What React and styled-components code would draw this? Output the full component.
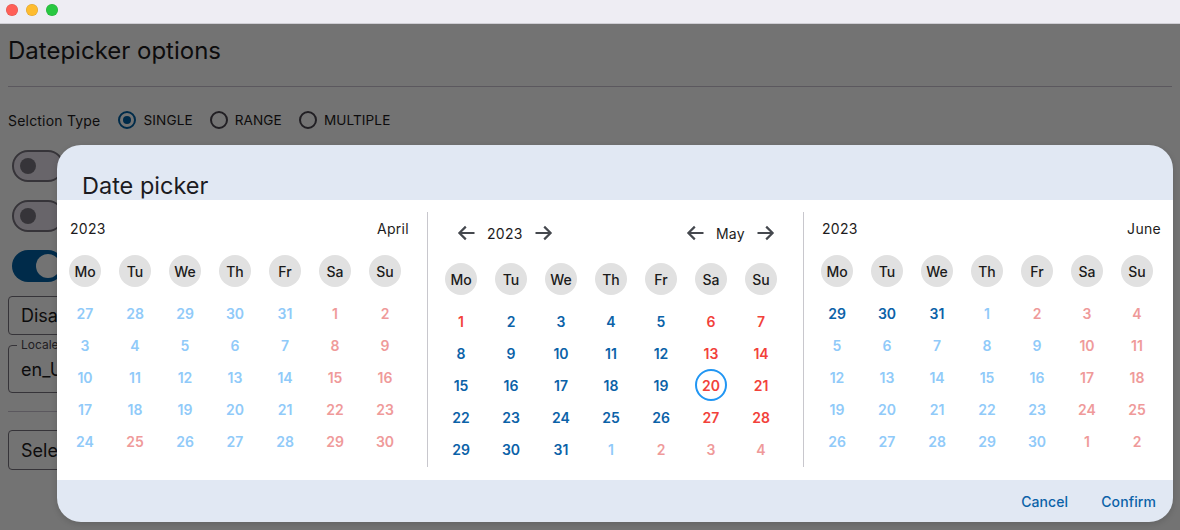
import React from 'react';
import styled, { createGlobalStyle, css } from 'styled-components';

const GlobalStyle = createGlobalStyle`
  html, body { margin: 0; padding: 0; width: 100%; height: 100%; overflow: hidden; background: #ffffff; }
  body { font-family: Inter, "Noto Sans", sans-serif; -webkit-font-smoothing: antialiased; }
  * { box-sizing: border-box; }
`;

/* ---------- window chrome ---------- */
const Window = styled.div`
  width: 1180px;
  height: 530px;
  display: flex;
  flex-direction: column;
  background: #ffffff;
`;

const TitleBar = styled.div`
  height: 24px;
  flex: none;
  display: flex;
  align-items: flex-start;
  gap: 8px;
  padding: 4px 0 0 6px;
  background: #eeedf3;
  border-bottom: 1px solid #cfced4;
`;

const Light = styled.span`
  width: 12px;
  height: 12px;
  border-radius: 50%;
  background: ${(p) => p.$color};
  box-shadow: inset 0 0 0 0.5px rgba(0, 0, 0, 0.15);
`;

const Viewport = styled.div`
  position: relative;
  flex: 1;
  overflow: hidden;
`;

/* ---------- underlying page ---------- */
const Page = styled.div`
  padding: 12px 8px 0;
  display: flex;
  flex-direction: column;
  color: #1d1b20;
`;

const PageTitle = styled.h1`
  margin: 0;
  font-size: 24px;
  line-height: 30px;
  font-weight: 400;
`;

const Rule = styled.hr`
  margin: ${(p) => p.$top}px 0 0;
  border: none;
  height: 1px;
  background: #cac4d0;
`;

const RadioRow = styled.div`
  margin-top: 21px;
  height: 24px;
  display: flex;
  align-items: center;
  font-size: 14px;
  letter-spacing: 0.2px;
`;

const RowLabel = styled.span`
  margin-right: 18px;
`;

const RadioOption = styled.label`
  display: flex;
  align-items: center;
  gap: 7px;
  margin-right: 17px;
  font-size: 13.6px;
  letter-spacing: 0.1px;
`;

const RadioCircle = styled.span`
  width: 18px;
  height: 18px;
  border-radius: 50%;
  border: 2px solid ${(p) => (p.$checked ? '#0061a4' : '#49454f')};
  display: flex;
  align-items: center;
  justify-content: center;
  &::after {
    content: '';
    width: 8px;
    height: 8px;
    border-radius: 50%;
    background: ${(p) => (p.$checked ? '#0061a4' : 'transparent')};
  }
`;

const ToggleList = styled.div`
  margin-top: 18px;
  padding-left: 4px;
  display: flex;
  flex-direction: column;
  gap: 18px;
`;

const Track = styled.span`
  width: 52px;
  height: 32px;
  border-radius: 16px;
  display: flex;
  align-items: center;
  ${(p) =>
    p.$on
      ? css`
          background: #0061a4;
          justify-content: flex-end;
          padding-right: 4px;
        `
      : css`
          background: #e7e0ec;
          border: 2px solid #79747e;
          padding-left: 6px;
        `}
`;

const Thumb = styled.span`
  width: ${(p) => (p.$on ? 24 : 16)}px;
  height: ${(p) => (p.$on ? 24 : 16)}px;
  border-radius: 50%;
  background: ${(p) => (p.$on ? '#ffffff' : '#79747e')};
`;

const Field = styled.div`
  position: relative;
  margin-top: ${(p) => p.$top}px;
  width: 420px;
  height: ${(p) => p.$h}px;
  border: 1px solid #79747e;
  border-radius: 4px;
  padding: 0 12px;
  display: flex;
  align-items: center;
  font-size: 18px;
  color: #1d1b20;
`;

const FieldLabel = styled.span`
  position: absolute;
  top: -8px;
  left: 8px;
  padding: 0 4px;
  background: #ffffff;
  font-size: 12px;
  line-height: 14px;
  color: #49454f;
`;

/* ---------- dialog ---------- */
const Scrim = styled.div`
  position: absolute;
  inset: 0;
  background: rgba(0, 0, 0, 0.55);
  padding: 121px 7px 0 57px;
`;

const Dialog = styled.div`
  width: 1116px;
  border-radius: 24px;
  overflow: hidden;
  background: #e1e8f3;
  display: flex;
  flex-direction: column;
  box-shadow: 0 2px 6px rgba(0, 0, 0, 0.15);
`;

const DialogHeader = styled.div`
  height: 55px;
  padding: 0 25px;
  display: flex;
  align-items: flex-end;
`;

const DialogTitle = styled.h2`
  margin: 0;
  font-size: 23.5px;
  line-height: 28px;
  font-weight: 400;
  color: #1c1b1f;
`;

const DialogBody = styled.div`
  background: #ffffff;
  display: flex;
  padding: 12px 0 13px 12px;
`;

const MonthPanel = styled.div`
  display: flex;
  flex-direction: column;
  padding: 0 26px 2px 17px;
  &:first-child {
    padding-left: 0;
  }
  &:last-child {
    padding-right: 20px;
  }
  & + & {
    border-left: 1px solid #c8c7cd;
  }
`;

const MonthHeader = styled.div`
  height: ${(p) => (p.$nav ? 42 : 34)}px;
  display: flex;
  align-items: center;
  justify-content: space-between;
  margin-right: ${(p) => (p.$nav ? -4 : -8)}px;
  padding: ${(p) => (p.$nav ? '0 0 0 6px' : '0 0 2px 1px')};
  font-size: 14px;
  letter-spacing: 0.3px;
  color: #1d1b20;
`;

const NavGroup = styled.div`
  display: flex;
  align-items: center;
  gap: 6px;
`;

const IconButton = styled.button`
  width: 30px;
  height: 30px;
  padding: 0;
  border: none;
  background: none;
  color: #45484e;
  display: flex;
  align-items: center;
  justify-content: center;
`;

const WeekGrid = styled.div`
  display: grid;
  grid-template-columns: repeat(7, 32px);
  column-gap: 18px;
  grid-auto-rows: 32px;
  margin-top: ${(p) => p.$top}px;
`;

const WeekdayBadge = styled.span`
  width: 32px;
  height: 32px;
  border-radius: 50%;
  background: #e1e1e1;
  display: flex;
  align-items: center;
  justify-content: center;
  font-size: 14px;
  font-weight: 500;
  color: #1b1b1b;
`;

const DayCell = styled.span`
  width: 32px;
  height: 32px;
  border-radius: 50%;
  display: flex;
  align-items: center;
  justify-content: center;
  font-size: 14px;
  font-weight: 600;
  color: ${(p) => p.$color};
  border: 2px solid ${(p) => (p.$today ? '#2196f3' : 'transparent')};
`;

const DialogFooter = styled.div`
  height: 42px;
  display: flex;
  justify-content: flex-end;
  align-items: center;
  gap: 9px;
  padding-right: 5px;
`;

const TextButton = styled.button`
  height: 36px;
  padding: 0 12px;
  border: none;
  background: none;
  font-family: inherit;
  font-size: 14px;
  font-weight: 500;
  letter-spacing: 0.1px;
  color: #0b62a8;
`;

/* ---------- data ---------- */
const WEEKDAYS = ['Mo', 'Tu', 'We', 'Th', 'Fr', 'Sa', 'Su'];
const MONTH_NAMES = ['January', 'February', 'March', 'April', 'May', 'June', 'July', 'August', 'September', 'October', 'November', 'December'];
const HOLIDAYS = new Set(['2023-4-25', '2023-5-1', '2023-6-2']);
const FOCUS_MONTH = 4;
const TODAY = '2023-5-20';

const COLORS = {
  dark: '#0b62a8',
  darkRed: '#f2413a',
  light: '#90caf9',
  lightRed: '#ef9a9a',
};

function buildCells(year, month) {
  const first = new Date(year, month, 1);
  const offset = (first.getDay() + 6) % 7;
  const cells = [];
  for (let i = 0; i < 35; i++) {
    const d = new Date(year, month, 1 - offset + i);
    const key = `${d.getFullYear()}-${d.getMonth() + 1}-${d.getDate()}`;
    const weekend = i % 7 >= 5;
    const red = weekend || HOLIDAYS.has(key);
    const focus = d.getMonth() === FOCUS_MONTH;
    const color = focus ? (red ? COLORS.darkRed : COLORS.dark) : red ? COLORS.lightRed : COLORS.light;
    cells.push({ key, day: d.getDate(), color, today: key === TODAY });
  }
  return cells;
}

const Arrow = ({ dir }) => (
  <svg width="18" height="16" viewBox="0 0 18 16" fill="none" stroke="currentColor" strokeWidth="2.2" style={{ transform: dir === 'right' ? 'scaleX(-1)' : undefined }}>
    <path d="M17.5 8H2.5M8.8 1.6 2.4 8l6.4 6.4" />
  </svg>
);

function Month({ year, month, nav }) {
  const cells = buildCells(year, month);
  return (
    <MonthPanel>
      {nav ? (
        <MonthHeader $nav>
          <NavGroup>
            <IconButton aria-label="previous year"><Arrow dir="left" /></IconButton>
            <span>{year}</span>
            <IconButton aria-label="next year"><Arrow dir="right" /></IconButton>
          </NavGroup>
          <NavGroup>
            <IconButton aria-label="previous month"><Arrow dir="left" /></IconButton>
            <span>{MONTH_NAMES[month]}</span>
            <IconButton aria-label="next month"><Arrow dir="right" /></IconButton>
          </NavGroup>
        </MonthHeader>
      ) : (
        <MonthHeader>
          <span>{year}</span>
          <span>{MONTH_NAMES[month]}</span>
        </MonthHeader>
      )}
      <WeekGrid $top={9}>
        {WEEKDAYS.map((w) => (
          <WeekdayBadge key={w}>{w}</WeekdayBadge>
        ))}
      </WeekGrid>
      <WeekGrid $top={10}>
        {cells.map((c) => (
          <DayCell key={c.key} $color={c.color} $today={c.today}>
            {c.day}
          </DayCell>
        ))}
      </WeekGrid>
    </MonthPanel>
  );
}

export default function App() {
  return (
    <Window>
      <GlobalStyle />
      <TitleBar>
        <Light $color="#ff5f57" />
        <Light $color="#febc2e" />
        <Light $color="#28c840" />
      </TitleBar>
      <Viewport>
        <Page>
          <PageTitle>Datepicker options</PageTitle>
          <Rule $top={20} />
          <RadioRow>
            <RowLabel>Selction Type</RowLabel>
            <RadioOption><RadioCircle $checked />SINGLE</RadioOption>
            <RadioOption><RadioCircle />RANGE</RadioOption>
            <RadioOption><RadioCircle />MULTIPLE</RadioOption>
          </RadioRow>
          <ToggleList>
            <Track><Thumb /></Track>
            <Track><Thumb /></Track>
            <Track $on><Thumb $on /></Track>
          </ToggleList>
          <Field $top={14} $h={39}>Disabled</Field>
          <Field $top={10} $h={48}>
            <FieldLabel>Locale</FieldLabel>
            en_US
          </Field>
          <Rule $top={18} />
          <Field $top={18} $h={40}>Select</Field>
        </Page>
        <Scrim>
          <Dialog>
            <DialogHeader>
              <DialogTitle>Date picker</DialogTitle>
            </DialogHeader>
            <DialogBody>
              <Month year={2023} month={3} />
              <Month year={2023} month={4} nav />
              <Month year={2023} month={5} />
            </DialogBody>
            <DialogFooter>
              <TextButton>Cancel</TextButton>
              <TextButton>Confirm</TextButton>
            </DialogFooter>
          </Dialog>
        </Scrim>
      </Viewport>
    </Window>
  );
}
